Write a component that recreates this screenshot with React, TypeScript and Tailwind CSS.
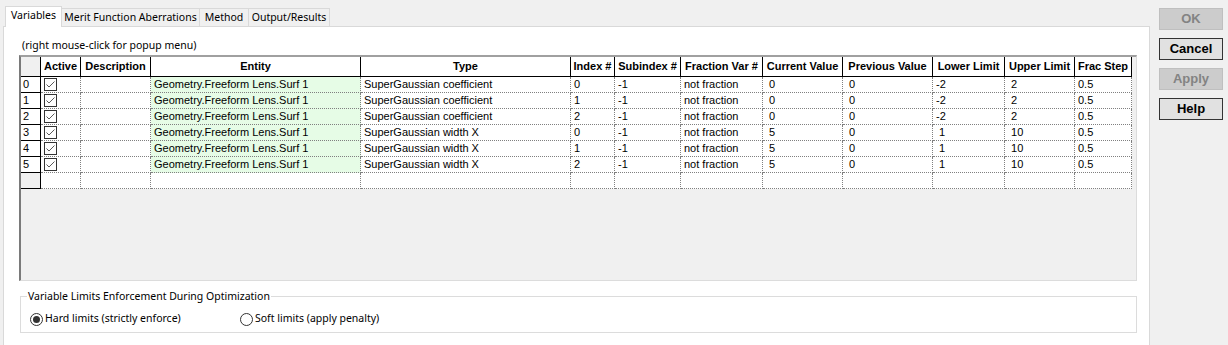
import React from 'react';

const ui = { fontFamily: '"Noto Sans", "Liberation Sans", sans-serif' };
const grid = { fontFamily: '"Liberation Sans", Arial, sans-serif' };

const cols = [
  { label: 'Active', w: 'w-[40px]' },
  { label: 'Description', w: 'w-[70px]' },
  { label: 'Entity', w: 'w-[210px]' },
  { label: 'Type', w: 'w-[210px]' },
  { label: 'Index #', w: 'w-[44px]' },
  { label: 'Subindex #', w: 'w-[66px]' },
  { label: 'Fraction Var #', w: 'w-[82px]' },
  { label: 'Current Value', w: 'w-[80px]' },
  { label: 'Previous Value', w: 'w-[90px]' },
  { label: 'Lower Limit', w: 'w-[72px]' },
  { label: 'Upper Limit', w: 'w-[70px]' },
  { label: 'Frac Step', w: 'w-[57px]' },
];

const rows = [
  ['SuperGaussian coefficient', '0', '-1', '-2', ' 2', ' 0'],
  ['SuperGaussian coefficient', '1', '-1', '-2', ' 2', ' 0'],
  ['SuperGaussian coefficient', '2', '-1', '-2', ' 2', ' 0'],
  ['SuperGaussian width X', '0', '-1', ' 1', ' 10', ' 5'],
  ['SuperGaussian width X', '1', '-1', ' 1', ' 10', ' 5'],
  ['SuperGaussian width X', '2', '-1', ' 1', ' 10', ' 5'],
];

function Check() {
  return (
    <div className="w-[13px] h-[13px] border border-[#333333] bg-white ml-[3px]">
      <svg width="11" height="11" viewBox="0 0 11 11">
        <polyline points="1.5,5.5 4,8 9.5,2.5" fill="none" stroke="#5a5a5a" strokeWidth="1" />
      </svg>
    </div>
  );
}

function Cell({ w, green, children }: { w: string; green?: boolean; children?: React.ReactNode }) {
  return (
    <div
      className={`${w} h-full shrink-0 border-r border-b border-dotted border-[#808080] pl-[3px] flex items-center whitespace-pre overflow-hidden ${green ? 'bg-[#e6fce6]' : 'bg-white'}`}
    >
      {children}
    </div>
  );
}

function Btn({ label, disabled }: { label: string; disabled?: boolean }) {
  return (
    <div
      className={`w-[64px] h-[22px] flex items-center justify-center text-[13px] font-bold border ${
        disabled ? 'bg-[#cccccc] border-[#bfbfbf] text-[#838383]' : 'bg-[#e1e1e1] border-[#333333] text-black'
      }`}
      style={grid}
    >
      {label}
    </div>
  );
}

export default function App() {
  return (
    <div className="w-[1228px] h-[345px] bg-[#f0f0f0] flex overflow-hidden text-black">
      <div className="w-[1150px] shrink-0 flex flex-col pl-[3px]">
        {/* Tabs */}
        <div className="h-[26px] flex items-end pl-[2px] relative z-10 text-[10.5px]" style={ui}>
          <div className="w-[57px] h-[21px] -mb-[1px] bg-white border-l border-r border-t border-[#d9d9d9] flex items-center justify-center pb-[2px]">
            Variables
          </div>
          <div className="w-[138px] h-[18px] bg-[#f0f0f0] border-r border-t border-[#d9d9d9] flex items-center justify-center">
            Merit Function Aberrations
          </div>
          <div className="w-[49px] h-[18px] bg-[#f0f0f0] border-r border-t border-[#d9d9d9] flex items-center justify-center">
            Method
          </div>
          <div className="w-[81px] h-[18px] bg-[#f0f0f0] border-r border-t border-[#d9d9d9] flex items-center justify-center">
            Output/Results
          </div>
        </div>

        {/* Panel */}
        <div className="flex-1 bg-white border-l border-r border-t border-[#d9d9d9] pl-[15px] pt-[11px]">
          <div className="h-[14px] ml-[3px] text-[10.5px] leading-[14px]" style={ui}>
            (right mouse-click for popup menu)
          </div>

          {/* Grid */}
          <div
            className="mt-[3px] w-[1118px] h-[226px] bg-[#f0f0f0] border-t-2 border-l-2 border-t-[#a0a0a0] border-l-[#7a7a7a] border-r border-b border-r-[#dcdcdc] border-b-[#dcdcdc] text-[11px]"
            style={grid}
          >
            <div className="flex h-[20px]">
              <div className="w-[20px] h-full shrink-0 bg-[#f0f0f0] border-r border-b border-black" />
              {cols.map((c) => (
                <div
                  key={c.label}
                  className={`${c.w} h-full shrink-0 bg-white border-r border-b border-black flex items-center justify-center font-bold whitespace-nowrap`}
                >
                  {c.label}
                </div>
              ))}
            </div>
            {rows.map((r, i) => (
              <div key={i} className="flex h-[16px]">
                <div className="w-[20px] h-full shrink-0 bg-white border-r border-b border-black pl-[2px] flex items-center">
                  {i}
                </div>
                <div className="w-[40px] h-full shrink-0 bg-white border-r border-b border-dotted border-[#808080] flex items-center">
                  <Check />
                </div>
                <Cell w="w-[70px]" />
                <Cell w="w-[210px]" green>
                  Geometry.Freeform Lens.Surf 1
                </Cell>
                <Cell w="w-[210px]">{r[0]}</Cell>
                <Cell w="w-[44px]">{r[1]}</Cell>
                <Cell w="w-[66px]">{r[2]}</Cell>
                <Cell w="w-[82px]">not fraction</Cell>
                <Cell w="w-[80px]">{r[5]}</Cell>
                <Cell w="w-[90px]">{' 0'}</Cell>
                <Cell w="w-[72px]">{r[3]}</Cell>
                <Cell w="w-[70px]">{r[4]}</Cell>
                <Cell w="w-[57px]">0.5</Cell>
              </div>
            ))}
            <div className="flex h-[16px]">
              <div className="w-[20px] h-full shrink-0 bg-[#f0f0f0] border-r border-b border-black" />
              <Cell w="w-[40px]" />
              <Cell w="w-[70px]" />
              <Cell w="w-[210px]" />
              <Cell w="w-[210px]" />
              <Cell w="w-[44px]" />
              <Cell w="w-[66px]" />
              <Cell w="w-[82px]" />
              <Cell w="w-[80px]" />
              <Cell w="w-[90px]" />
              <Cell w="w-[72px]" />
              <Cell w="w-[70px]" />
              <Cell w="w-[57px]" />
            </div>
          </div>

          {/* Group box */}
          <fieldset
            className="mt-[8px] ml-[1px] w-[1117px] border border-[#dcdcdc] pl-[6px] pt-[8px] pb-[5px] text-[10.5px]"
            style={ui}
          >
            <legend className="px-[1px] leading-[14px]">Variable Limits Enforcement During Optimization</legend>
            <div className="flex items-center h-[16px] ml-[3px]">
              <div className="w-[210px] flex items-center gap-[2px]">
                <div className="w-[13px] h-[13px] rounded-full border border-[#333333] bg-white flex items-center justify-center">
                  <div className="w-[7px] h-[7px] rounded-full bg-[#333333]" />
                </div>
                <span>Hard limits (strictly enforce)</span>
              </div>
              <div className="flex items-center gap-[2px]">
                <div className="w-[13px] h-[13px] rounded-full border border-[#333333] bg-white" />
                <span>Soft limits (apply penalty)</span>
              </div>
            </div>
          </fieldset>
        </div>
      </div>

      {/* Dialog buttons */}
      <div className="flex flex-col gap-[8px] pl-[9px] pt-[8px]">
        <Btn label="OK" disabled />
        <Btn label="Cancel" />
        <Btn label="Apply" disabled />
        <Btn label="Help" />
      </div>
    </div>
  );
}
